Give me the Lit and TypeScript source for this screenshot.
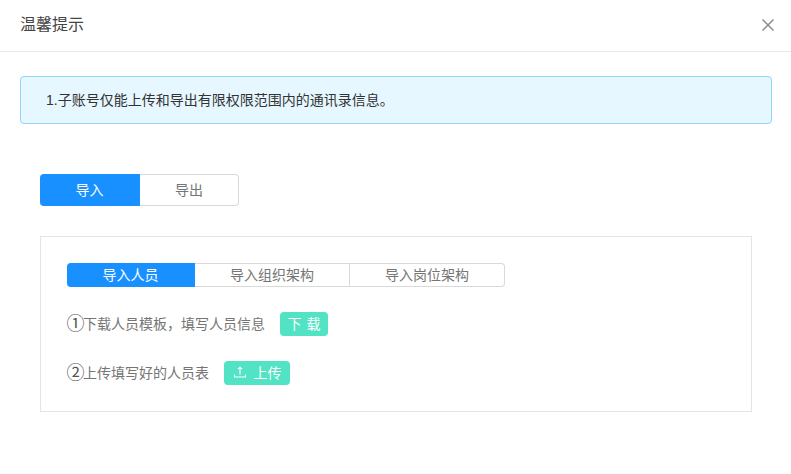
import { LitElement, html, css } from "lit";
import { customElement } from "lit/decorators.js";

@customElement("app-root")
export class AppRoot extends LitElement {
  static styles = css`
    :host {
      display: block;
      width: 791px;
      height: 474px;
      background: #fff;
      overflow: hidden;
      font-family: "Liberation Sans", "Noto Sans CJK SC", sans-serif;
      color: #606266;
    }
    * { box-sizing: border-box; }
    .header {
      height: 52px;
      border-bottom: 1px solid #e8e8e8;
      display: flex;
      align-items: center;
      justify-content: space-between;
      padding: 0 16px 2px 20px;
    }
    .title { font-size: 16px; color: #444; line-height: 20px; }
    .close { width: 14px; height: 14px; display: block; }
    .body { padding: 24px 19px 0 20px; }
    .alert {
      height: 48px;
      border: 1px solid #91d5ff;
      border-radius: 4px;
      background: #e6f7ff;
      color: #333;
      font-size: 14px;
      display: flex;
      align-items: center;
      padding: 0 0 2px 25px;
    }
    .tabs { display: flex; margin: 50px 0 0 20px; height: 32px; width: 199px; }
    .tab {
      display: flex;
      align-items: center;
      justify-content: center;
      border: 1px solid #d9d9d9;
      font-size: 14px;
      color: #757575;
      background: #fff;
      padding-bottom: 2px;
    }
    .tab.on { background: #1890ff; border-color: #1890ff; color: #fff; }
    .tabs .tab { border-radius: 0 4px 4px 0; border-left: 0; width: 99px; }
    .tabs .tab.on { width: 100px; border-radius: 4px 0 0 4px; }
    .panel {
      margin: 30px 0 0 20px;
      width: 712px;
      height: 176px;
      border: 1px solid #e4e4e4;
      padding: 26px 0 0 26px;
    }
    .sub { display: flex; height: 24px; width: 438px; }
    .sub .tab { width: 155px; border-left: 0; }
    .sub .tab.on { width: 128px; border-radius: 4px 0 0 4px; }
    .sub .tab:last-child { border-radius: 0 4px 4px 0; }
    .row { display: flex; align-items: center; height: 24px; font-size: 14px; color: #757575; margin-top: 25px; }
    .label { padding-bottom: 2px; }
    .num { width: 16px; font-size: 18px; line-height: 24px; display: flex; justify-content: center; color: #555; padding-left: 1px; }
    .btn {
      height: 24px;
      border-radius: 4px;
      background: #52e3c4;
      color: #fff;
      font-size: 14px;
      display: flex;
      align-items: center;
      justify-content: center;
      padding-bottom: 2px;
    }
    .dl { width: 48px; margin-left: 15px; word-spacing: 1px; }
    .ul { width: 66px; margin-left: 15px; }
    .ul svg { width: 14px; height: 14px; margin-right: 7px; display: block; }
  `;

  render() {
    return html`
      <div class="header">
        <div class="title">温馨提示</div>
        <svg class="close" viewBox="0 0 14 14" fill="none" stroke="#8c8c8c" stroke-width="1.5">
          <path d="M1.5 1.5 12.5 12.5M12.5 1.5 1.5 12.5"></path>
        </svg>
      </div>
      <div class="body">
        <div class="alert">1.子账号仅能上传和导出有限权限范围内的通讯录信息。</div>
        <div class="tabs">
          <div class="tab on">导入</div>
          <div class="tab">导出</div>
        </div>
        <div class="panel">
          <div class="sub">
            <div class="tab on">导入人员</div>
            <div class="tab">导入组织架构</div>
            <div class="tab">导入岗位架构</div>
          </div>
          <div class="row">
            <span class="num">①</span><span class="label">下载人员模板，填写人员信息</span>
            <div class="btn dl">下 载</div>
          </div>
          <div class="row">
            <span class="num">②</span><span class="label">上传填写好的人员表</span>
            <div class="btn ul">
              <svg viewBox="0 0 14 14" fill="none" stroke="#fff" stroke-width="1.1">
                <path d="M7 9.5V2.2M5 4.2 7 2.2l2 2M1.5 9.5v2.5h11V9.5"></path>
              </svg>
              上传
            </div>
          </div>
        </div>
      </div>
    `;
  }
}
